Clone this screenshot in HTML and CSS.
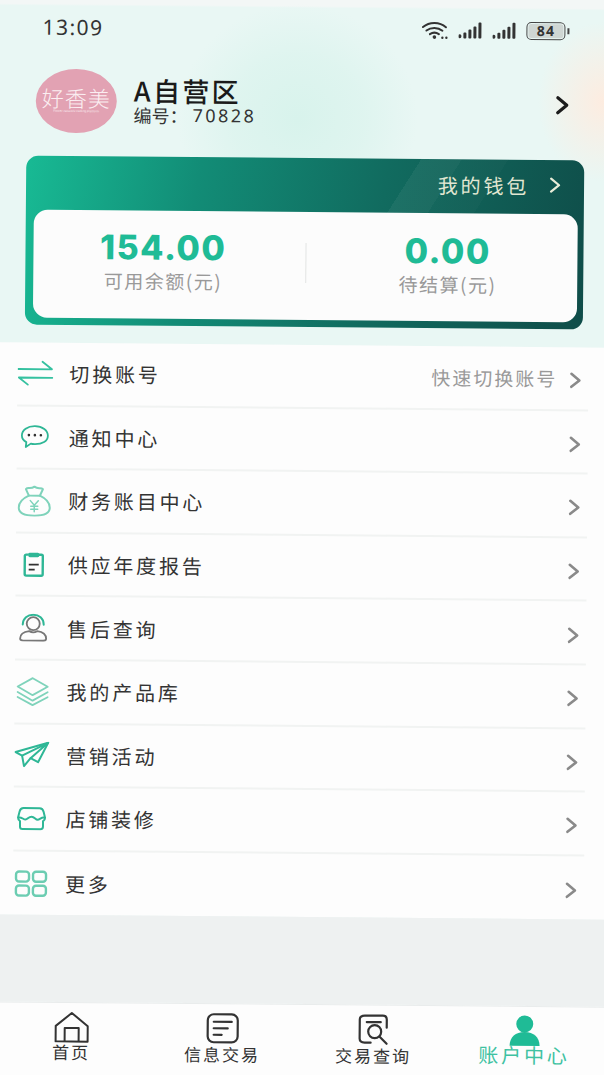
FILE: index.html
```html
<!DOCTYPE html>
<html lang="zh">
<head>
<meta charset="utf-8">
<title>账户中心</title>
<link rel="stylesheet" href="styles.css">
</head>
<body>
<div class="app">
  <header class="top">
    <div class="status">
      <span class="time">13:09</span>
      <div class="status-icons">
        <svg class="wifi" width="28" height="20" viewBox="0 0 28 20" fill="none" stroke="#333" stroke-linecap="round"><path d="M1.5 7C8 1.5 18 1.5 24.5 7" stroke-width="2"/><path d="M5 10.5C9.500 7 16.500 7 21 10.500" stroke-width="2"/><path d="M8.500 14C11.500 12 14.500 12 17.500 14" stroke-width="2"/><circle cx="13" cy="17" r="1.800" fill="#333" stroke="none"/><circle cx="21" cy="17.500" r="1.200" fill="#333" stroke="none"/><circle cx="25" cy="17.500" r="1.200" fill="#333" stroke="none"/></svg>
        <svg width="25" height="18" viewBox="0 0 25 18" fill="#333"><rect x="0" y="13" width="3" height="4" rx="1.500"/><rect x="5" y="11" width="3" height="6" rx="1"/><rect x="10" y="8" width="3" height="9" rx="1"/><rect x="15" y="5" width="3" height="12" rx="1"/><rect x="20" y="1" width="3" height="16" rx="1"/></svg>
        <svg width="25" height="18" viewBox="0 0 25 18" fill="#333"><rect x="0" y="13" width="3" height="4" rx="1.500"/><rect x="5" y="11" width="3" height="6" rx="1"/><rect x="10" y="8" width="3" height="9" rx="1"/><rect x="15" y="5" width="3" height="12" rx="1"/><rect x="20" y="1" width="3" height="16" rx="1"/></svg>
        <span class="battery"><span class="battery-level">84</span></span>
        <span class="battery-tip"></span>
      </div>
    </div>
    <div class="profile">
      <div class="avatar">
        <span class="avatar-name">好香美</span>
        <span class="avatar-sub">Flower network trading platform</span>
      </div>
      <div class="profile-text">
        <div class="shop">A自营区</div>
        <div class="shop-id">编号：<span class="shop-num">70828</span></div>
      </div>
      <svg class="profile-arrow" width="16" height="20" viewBox="0 0 16 20" fill="none" stroke="#1c1c1c" stroke-width="3.200" stroke-linecap="round" stroke-linejoin="round"><path d="M3 2.500L12 10L3 17.500"/></svg>
    </div>
    <section class="wallet">
      <div class="wallet-bar">
        <span class="wallet-link">我的钱包</span>
        <svg width="14" height="18" viewBox="0 0 14 18" fill="none" stroke="#e8ecd8" stroke-width="2.200" stroke-linecap="round" stroke-linejoin="round"><path d="M3 2.500L11 9L3 15.500"/></svg>
      </div>
      <div class="balance">
        <div class="balance-col balance-col-left">
          <div class="amount">154.00</div>
          <div class="amount-label">可用余额(元)</div>
        </div>
        <div class="balance-rule"></div>
        <div class="balance-col balance-col-right">
          <div class="amount">0.00</div>
          <div class="amount-label">待结算(元)</div>
        </div>
      </div>
    </section>
  </header>

  <main class="menu">
    <div class="row">
      <span class="row-icon"><svg width="36" height="28" viewBox="0 0 36 28" fill="none" stroke="#35c1a0" stroke-width="1.800" stroke-linecap="round" stroke-linejoin="round"><path d="M1 9.500H34.500L25 2"/><path d="M35 18H1.500L10.500 25"/></svg></span>
      <span class="row-label">切换账号</span>
      <span class="row-hint">快速切换账号</span>
      <svg class="chev" width="14" height="18" viewBox="0 0 14 18" fill="none" stroke="#8a8a8a" stroke-width="2.600" stroke-linecap="round" stroke-linejoin="round"><path d="M3 2.500L11 9L3 15.500"/></svg>
    </div>
    <div class="row">
      <span class="row-icon"><svg width="30" height="24" viewBox="0 0 30 24" fill="none" stroke="#2fb796" stroke-width="1.800" stroke-linejoin="round"><path d="M15 1.500C22.500 1.500 28 5.500 28 11C28 16.500 22.500 19.500 15 19.500C13.500 19.500 12 19.400 11 19L6 22.500L6.500 17.500C3.500 16 2 13.500 2 11C2 5.500 7.500 1.500 15 1.500Z"/><circle cx="9" cy="10.500" r="1.300" fill="#333" stroke="none"/><circle cx="15" cy="10.500" r="1.300" fill="#333" stroke="none"/><circle cx="21" cy="10.500" r="1.300" fill="#333" stroke="none"/></svg></span>
      <span class="row-label">通知中心</span>
      <svg class="chev" width="14" height="18" viewBox="0 0 14 18" fill="none" stroke="#8a8a8a" stroke-width="2.600" stroke-linecap="round" stroke-linejoin="round"><path d="M3 2.500L11 9L3 15.500"/></svg>
    </div>
    <div class="row">
      <span class="row-icon"><svg width="34" height="32" viewBox="0 0 34 32" fill="none" stroke="#7fd3bb" stroke-width="2" stroke-linecap="round" stroke-linejoin="round"><path d="M11.500 11C5 14 1.500 18.500 1.500 23C1.500 28.500 6 31 17 31C28 31 32.500 28.500 32.500 23C32.500 18.500 29 14 22.500 11"/><path d="M11.500 11L8.500 4.500C10.500 2 13 5 17 2C21 5 23.500 2 25.500 4.500L22.500 11Z"/><path d="M13 16L17 20.500L21 16M17 20.500V27M13.500 21.500H20.500M13.500 24.500H20.500" stroke-width="1.500"/></svg></span>
      <span class="row-label">财务账目中心</span>
      <svg class="chev" width="14" height="18" viewBox="0 0 14 18" fill="none" stroke="#8a8a8a" stroke-width="2.600" stroke-linecap="round" stroke-linejoin="round"><path d="M3 2.500L11 9L3 15.500"/></svg>
    </div>
    <div class="row">
      <span class="row-icon"><svg width="24" height="26" viewBox="0 0 24 26" fill="none" stroke="#2fb796" stroke-width="2.400" stroke-linejoin="round"><path d="M7 3H4.500C3.500 3 3 3.500 3 4.500V22.500C3 23.500 3.500 24 4.500 24H19.500C20.500 24 21 23.500 21 22.500V4.500C21 3.500 20.500 3 19.500 3H17"/><rect x="6.500" y="1" width="11" height="4.500" fill="#2fb796" stroke="none" rx="1.500"/><path d="M7 13H17" stroke="#333" stroke-width="1.800"/><path d="M7 18H13" stroke="#333" stroke-width="1.800"/></svg></span>
      <span class="row-label">供应年度报告</span>
      <svg class="chev" width="14" height="18" viewBox="0 0 14 18" fill="none" stroke="#8a8a8a" stroke-width="2.600" stroke-linecap="round" stroke-linejoin="round"><path d="M3 2.500L11 9L3 15.500"/></svg>
    </div>
    <div class="row">
      <span class="row-icon"><svg width="30" height="28" viewBox="0 0 30 28" fill="none" stroke="#777" stroke-width="1.800" stroke-linecap="round"><circle cx="15" cy="10" r="6.500"/><path d="M2 25C2 20 7 18 11 17.500C13.500 19 16.500 19 19 17.500C23 18 28 20 28 25C28 26.500 27 27 25 27H5C3 27 2 26.500 2 25Z"/><path d="M4.500 11C4.500 4.500 9.500 1 15 1C20.500 1 25.500 4.500 25.500 11" stroke="#2fb796" stroke-width="2"/></svg></span>
      <span class="row-label">售后查询</span>
      <svg class="chev" width="14" height="18" viewBox="0 0 14 18" fill="none" stroke="#8a8a8a" stroke-width="2.600" stroke-linecap="round" stroke-linejoin="round"><path d="M3 2.500L11 9L3 15.500"/></svg>
    </div>
    <div class="row">
      <span class="row-icon"><svg width="34" height="30" viewBox="0 0 34 30" fill="none" stroke="#7fd3bb" stroke-width="1.800" stroke-linecap="round" stroke-linejoin="round"><path d="M17 1.500L32 10L17 18.500L2 10Z"/><path d="M2 15.500L17 24L32 15.500"/><path d="M2 20.500L17 28.500L32 20.500"/></svg></span>
      <span class="row-label">我的产品库</span>
      <svg class="chev" width="14" height="18" viewBox="0 0 14 18" fill="none" stroke="#8a8a8a" stroke-width="2.600" stroke-linecap="round" stroke-linejoin="round"><path d="M3 2.500L11 9L3 15.500"/></svg>
    </div>
    <div class="row">
      <span class="row-icon"><svg width="36" height="26" viewBox="0 0 36 26" fill="none" stroke="#2fb796" stroke-width="2" stroke-linecap="round" stroke-linejoin="round"><path d="M1.500 10.500L34 1L24 20.500L16.500 16.500L10 24.500L8 14Z"/><path d="M8 14L34 1L16.500 16.500"/></svg></span>
      <span class="row-label">营销活动</span>
      <svg class="chev" width="14" height="18" viewBox="0 0 14 18" fill="none" stroke="#8a8a8a" stroke-width="2.600" stroke-linecap="round" stroke-linejoin="round"><path d="M3 2.500L11 9L3 15.500"/></svg>
    </div>
    <div class="row">
      <span class="row-icon"><svg width="30" height="24" viewBox="0 0 30 24" fill="none" stroke="#2fb796" stroke-width="2" stroke-linecap="round" stroke-linejoin="round"><path d="M7 1.500H23C25 1.500 26.500 3 27 5L28.500 11C28.500 13 27.500 14 26.500 14.500V20C26.500 21.500 25.500 22.500 24 22.500H6C4.500 22.500 3.500 21.500 3.500 20V14.500C2.500 14 1.500 13 1.500 11L3 5C3.500 3 5 1.500 7 1.500Z"/><path d="M2 11C5 10 6.500 13 9 13C11 13 12 10 15 10C18 10 19 13 21 13C23.500 13 25 10 28 11"/></svg></span>
      <span class="row-label">店铺装修</span>
      <svg class="chev" width="14" height="18" viewBox="0 0 14 18" fill="none" stroke="#8a8a8a" stroke-width="2.600" stroke-linecap="round" stroke-linejoin="round"><path d="M3 2.500L11 9L3 15.500"/></svg>
    </div>
    <div class="row">
      <span class="row-icon"><svg width="34" height="28" viewBox="0 0 34 28" fill="none" stroke="#6ccdb2" stroke-width="2.400"><rect x="2" y="2" width="13" height="10" rx="3"/><rect x="19" y="2" width="13" height="10" rx="3"/><rect x="2" y="16" width="13" height="10" rx="3"/><rect x="19" y="16" width="13" height="10" rx="3"/></svg></span>
      <span class="row-label">更多</span>
      <svg class="chev" width="14" height="18" viewBox="0 0 14 18" fill="none" stroke="#8a8a8a" stroke-width="2.600" stroke-linecap="round" stroke-linejoin="round"><path d="M3 2.500L11 9L3 15.500"/></svg>
    </div>
  </main>

  <div class="gap"></div>

  <nav class="tabs">
    <div class="tab">
      <svg width="36" height="32" viewBox="0 0 36 32" fill="none" stroke="#333" stroke-width="2" stroke-linejoin="round"><path d="M2 30.500V15L18 2L34 15V30.500Z"/><path d="M11 30.500V17H25V30.500"/></svg>
      <span class="tab-label">首页</span>
    </div>
    <div class="tab">
      <svg width="34" height="32" viewBox="0 0 34 32" fill="none" stroke="#333" stroke-width="2.200" stroke-linecap="round"><rect x="2" y="2" width="30" height="28" rx="6"/><path d="M8 9.500H26M8 16H22M8 22.500H16"/></svg>
      <span class="tab-label tab-label-down">信息交易</span>
    </div>
    <div class="tab">
      <svg width="34" height="32" viewBox="0 0 34 32" fill="none" stroke="#333" stroke-width="2.200" stroke-linecap="round" stroke-linejoin="round"><path d="M30 14V6C30 3.500 28.500 2 26 2H8C5 2 3 3.500 3 6V25C3 27.500 5 29 8 29H14"/><path d="M10 8.500H24"/><circle cx="18" cy="18" r="6.500"/><path d="M23 23L30 30"/></svg>
      <span class="tab-label tab-label-down">交易查询</span>
    </div>
    <div class="tab">
      <svg width="34" height="32" viewBox="0 0 34 32" fill="#1fbb96"><circle cx="17" cy="9" r="8.500"/><path d="M2 31C2 22 8 17 17 17C26 17 32 22 32 31Z"/></svg>
      <span class="tab-label tab-label-active">账户中心</span>
    </div>
  </nav>
</div>
</body>
</html>
```
FILE: styles.css
```css
* { box-sizing: border-box; }
html, body {
  margin: 0;
  width: 604px;
  height: 1075px;
  overflow: hidden;
  background: #eef7f5;
}
body {
  font-family: "Noto Sans CJK SC", "Noto Sans", sans-serif;
  color: #333;
}
.app {
  width: 604px;
  height: 1075px;
  display: flex;
  flex-direction: column;
  transform: rotate(0.5deg);
  transform-origin: 50% 50%;
}
.top {
  height: 351px;
  margin: -6px -6px 0;
  padding: 6px 6px 0;
  flex: none;
  background:
    radial-gradient(ellipse 120px 115px at 300px 125px, #d8f3ec 0%, rgba(216,243,236,.6) 55%, rgba(216,243,236,0) 100%),
    radial-gradient(ellipse 65px 80px at 605px 105px, #fdece0 0%, rgba(253,236,224,0) 100%),
    linear-gradient(180deg, #f3f7f6 0, #f3f7f6 12px, #e9f7f4 14px, #e9f7f4 100%);
}
.status {
  height: 54px;
  padding: 16px 39px 0 38px;
  display: flex;
  justify-content: space-between;
  align-items: flex-start;
}
.time {
  font: 400 21px "Noto Sans", sans-serif;
  letter-spacing: 1.500px;
  line-height: 26px;
  color: #333;
}
.status-icons {
  display: flex;
  align-items: center;
  gap: 9px;
  padding-top: 3px;
}
.battery {
  width: 39px;
  height: 18px;
  border: 1.500px solid #444;
  border-radius: 5px;
  padding: 1px;
  display: flex;
}
.battery-level {
  flex: 1;
  background: #cfd6d3;
  border-radius: 3px;
  font: 700 14px/13px "Noto Sans", sans-serif;
  text-align: center;
  letter-spacing: 1px;
  color: #333;
}
.battery-tip {
  width: 2px;
  height: 6px;
  background: #444;
  margin-left: -7px;
}
.profile {
  height: 64px;
  margin-top: 17px;
  padding: 0 37px 0 32px;
  display: flex;
  align-items: center;
}
.avatar {
  width: 81px;
  height: 64px;
  border-radius: 50%;
  background: #e2a2b3;
  display: flex;
  flex-direction: column;
  align-items: center;
  justify-content: center;
  overflow: hidden;
  color: #fbeef1;
  flex: none;
  padding-bottom: 4px;
}
.avatar-name {
  font: 300 22px/24px "Noto Sans CJK SC", sans-serif;
  letter-spacing: 1px;
}
.avatar-sub {
  font: 400 3px/5px "Noto Sans", sans-serif;
  white-space: nowrap;
}
.profile-text {
  margin: 0 0 4px 17px;
  flex: 1;
}
.shop {
  font-size: 27px;
  font-weight: 500;
  line-height: 29px;
  letter-spacing: 2.300px;
  color: #1a1a1a;
}
.shop-id {
  font-size: 18px;
  line-height: 20px;
  color: #333;
  display: flex;
}
.shop-num {
  font-family: "Noto Sans", sans-serif;
  letter-spacing: 2.400px;
  margin-left: 5px;
}
.wallet {
  height: 169px;
  margin: 23px 23px 0;
  border-radius: 12px;
  padding: 0 6px 7px 8px;
  display: flex;
  flex-direction: column;
  background: linear-gradient(100deg, #18ba94 0%, #128c76 30%, #116b5f 62%, #0f4d49 100%);
}
.wallet-bar {
  height: 54px;
  flex: none;
  display: flex;
  align-items: center;
  justify-content: flex-end;
  gap: 19px;
  padding: 0 16px 4px 0;
  background: linear-gradient(122deg, transparent 0, transparent 67%, rgba(255,255,255,.05) 67%, rgba(255,255,255,.05) 74%, rgba(255,255,255,.02) 74%, rgba(255,255,255,.02) 82%, transparent 82%);
}
.wallet-link {
  font-size: 20px;
  letter-spacing: 2.800px;
  color: #e2e7d2;
}
.balance {
  flex: 1;
  background: #fcfcfc;
  border-radius: 14px;
  display: flex;
  align-items: center;
}
.balance-col {
  flex: 1;
  text-align: center;
  padding-bottom: 10px;
}
.balance-col-left { padding-right: 12px; }
.balance-col-right { padding-left: 12px; padding-bottom: 8px; }
.amount {
  font: 800 34px/42px Inter, "Noto Sans", sans-serif;
  letter-spacing: 1.500px;
  color: #1fbb96;
}
.amount-label {
  font-size: 19px;
  line-height: 24px;
  letter-spacing: 1.500px;
  color: #999;
}
.balance-rule {
  width: 1px;
  height: 40px;
  background: #e2e4e3;
  margin-bottom: 6px;
}
.menu {
  flex: none;
  margin: 0 -6px;
  padding: 0 6px;
  background: #fdfdfd;
}
.row {
  height: 63.600px;
  margin: 0 17px 0 16px;
  padding-right: 6px;
  display: flex;
  align-items: center;
  border-bottom: 2px solid #f1f3f2;
}
.row:last-child { border-bottom: 0; }
.row-icon {
  width: 52px;
  flex: none;
  display: flex;
  justify-content: center;
  padding-right: 16px;
}
.row-label {
  flex: 1;
  font-size: 20px;
  letter-spacing: 2.800px;
  color: #333;
}
.row-hint {
  font-size: 19px;
  letter-spacing: 2px;
  color: #999;
  margin-right: 11px;
}
.chev {
  flex: none;
  margin-top: 5px;
}
.gap {
  flex: 1;
  margin: 0 -6px;
  background: #eef1f1;
}
.tabs {
  height: 77px;
  flex: none;
  margin: 0 -6px -6px;
  padding: 0 6px 6px;
  display: flex;
  background: #fdfdfd;
  border-top: 1px solid #e9ecec;
}
.tab {
  width: 151px;
  display: flex;
  flex-direction: column;
  align-items: center;
  padding-top: 8px;
}
.tab-label {
  font-size: 17px;
  line-height: 20px;
  letter-spacing: 2px;
  color: #333;
  margin-top: -1px;
}
.tab-label-down { margin-top: 0; }
.tab-label-active {
  font-size: 20px;
  letter-spacing: 2.800px;
  color: #3fc2a2;
  margin-top: -2px;
}
```
